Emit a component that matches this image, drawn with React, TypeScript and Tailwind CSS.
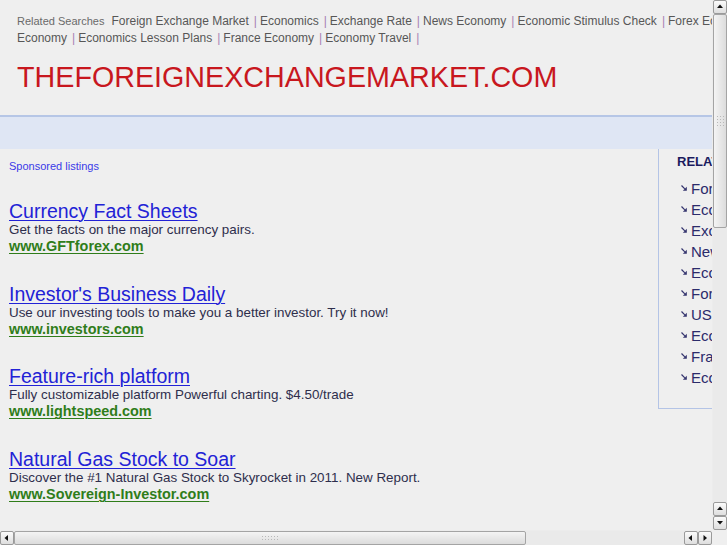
import React from "react";

const related = [
  "Foreign Exchange Market",
  "Economics",
  "Exchange Rate",
  "News Economy",
  "Economic Stimulus Check",
  "Forex Economy",
  "US Economy",
  "Economics Lesson Plans",
  "France Economy",
  "Economy Travel",
];

const ads = [
  { title: "Currency Fact Sheets", body: "Get the facts on the major currency pairs.", url: "www.GFTforex.com" },
  { title: "Investor's Business Daily", body: "Use our investing tools to make you a better investor. Try it now!", url: "www.investors.com" },
  { title: "Feature-rich platform", body: "Fully customizable platform Powerful charting. $4.50/trade", url: "www.lightspeed.com" },
  { title: "Natural Gas Stock to Soar", body: "Discover the #1 Natural Gas Stock to Skyrocket in 2011. New Report.", url: "www.Sovereign-Investor.com" },
];

function Sep() {
  return <span className="ml-[5px] mr-[3px] text-[#a682b4]">|</span>;
}

function Bullet() {
  return (
    <svg width="6" height="6" viewBox="0 0 6 6" className="mr-[4px] mt-[-4px] shrink-0">
      <path d="M0.5 0.5 L3.8 3.8" stroke="#34346e" strokeWidth="1.2" />
      <path d="M5.8 1.8 L5.8 5.8 L1.8 5.8 Z" fill="#34346e" />
    </svg>
  );
}

function Arrow({ dir }: { dir: "up" | "down" | "left" | "right" }) {
  const d = {
    up: "M1 5 L4 1.5 L7 5 Z",
    down: "M1 2 L4 5.5 L7 2 Z",
    left: "M5 1 L1.5 4 L5 7 Z",
    right: "M2.5 1 L6 4 L2.5 7 Z",
  }[dir];
  return (
    <svg width="8" height="8" viewBox="0 0 8 8">
      <path d={d} fill="#111" />
    </svg>
  );
}

function StepBtn({ dir }: { dir: "up" | "down" | "left" | "right" }) {
  return (
    <div className="flex h-[14px] w-[14px] items-center justify-center rounded-[2px] border border-[#9a9a9a] bg-gradient-to-b from-[#fbfbfb] to-[#dedede]">
      <Arrow dir={dir} />
    </div>
  );
}

function Grip({ vertical }: { vertical?: boolean }) {
  const dots = Array.from({ length: 12 });
  return (
    <div className={vertical ? "grid grid-cols-3 gap-[2px]" : "grid grid-cols-6 gap-[2px]"}>
      {dots.map((_, i) => (
        <div key={i} className="h-[1px] w-[1px] bg-[#b8b8b8]" />
      ))}
    </div>
  );
}

export default function App() {
  return (
    <div className="relative h-[545px] w-[727px] overflow-hidden bg-[#efefef] font-['Liberation_Sans',Arial,sans-serif]">
      <div className="w-[1000px]">
        <div className="px-[17px] pt-[13px]">
          <div className="whitespace-nowrap text-[12px] leading-[17px] text-[#575757]">
            <span className="mr-[7px] text-[11px] text-[#6a6a6a]">Related Searches</span>
            {related.slice(0, 6).map((r, i) => (
              <span key={r}>
                {i > 0 && <Sep />}
                {r}
              </span>
            ))}
            <Sep />US
          </div>
          <div className="whitespace-nowrap text-[12px] leading-[17px] text-[#575757]">
            Economy
            {related.slice(7).map((r) => (
              <span key={r}>
                <Sep />
                {r}
              </span>
            ))}
            <Sep />
          </div>
          <h1 className="mt-[12px] text-[28.7px] leading-[36px] text-[#c8171e]">THEFOREIGNEXCHANGEMARKET.COM</h1>
        </div>

        <div className="mt-[20px] h-[34px] border-t-2 border-[#b6c6e6] bg-[#dfe6f4]" />

        <div className="flex">
          <div className="w-[658px] pl-[9px] pt-[10px]">
            <div className="text-[11px] leading-[14px] text-[#3a3ae8]">Sponsored listings</div>
            <div className="mt-[28px] flex flex-col">
              {ads.map((a) => (
                <div key={a.title} className="h-[82.7px]">
                  <div className="text-[19.5px] leading-[21px] text-[#2222d6] underline decoration-1 underline-offset-2">{a.title}</div>
                  <div className="text-[13.4px] leading-[16px] text-[#2e2e4c]">{a.body}</div>
                  <div className="text-[14.4px] font-bold leading-[16px] text-[#2f7d1a] underline decoration-1 underline-offset-2">{a.url}</div>
                </div>
              ))}
            </div>
          </div>
          <div className="h-[260px] w-[240px] border-b border-l border-[#b4c4e6] pl-[18px] pt-[5px]">
            <div className="text-[13px] font-bold leading-[16px] text-[#1b1b5e]">RELATED SEARCHES</div>
            <div className="mt-[9px] flex flex-col pl-[4px]">
              {related.map((r) => (
                <div key={r} className="flex h-[21px] items-center whitespace-nowrap text-[15px] text-[#2b2b6b]">
                  <Bullet />
                  {r}
                </div>
              ))}
            </div>
          </div>
        </div>
      </div>

      {/* vertical scrollbar */}
      <div className="absolute right-0 top-0 flex h-[530px] w-[15px] flex-col bg-[#ececec] pl-[1px]">
        <StepBtn dir="up" />
        <div className="flex h-[214px] w-[14px] items-center justify-center rounded-[2px] border border-[#a4a4a4] bg-gradient-to-r from-[#f4f4f4] to-[#dcdcdc]">
          <Grip vertical />
        </div>
        <div className="flex-1 bg-[#eaeaea]" />
        <StepBtn dir="up" />
        <StepBtn dir="down" />
      </div>

      {/* horizontal scrollbar */}
      <div className="absolute bottom-0 left-0 flex h-[15px] w-[712px] bg-[#ececec] pt-[1px]">
        <StepBtn dir="left" />
        <div className="flex h-[14px] w-[512px] items-center justify-center rounded-[2px] border border-[#a4a4a4] bg-gradient-to-b from-[#f4f4f4] to-[#dcdcdc]">
          <Grip />
        </div>
        <div className="flex-1 bg-[#eaeaea]" />
        <StepBtn dir="left" />
        <StepBtn dir="right" />
      </div>
      <div className="absolute bottom-0 right-0 h-[15px] w-[15px] bg-[#efefef]" />
    </div>
  );
}
